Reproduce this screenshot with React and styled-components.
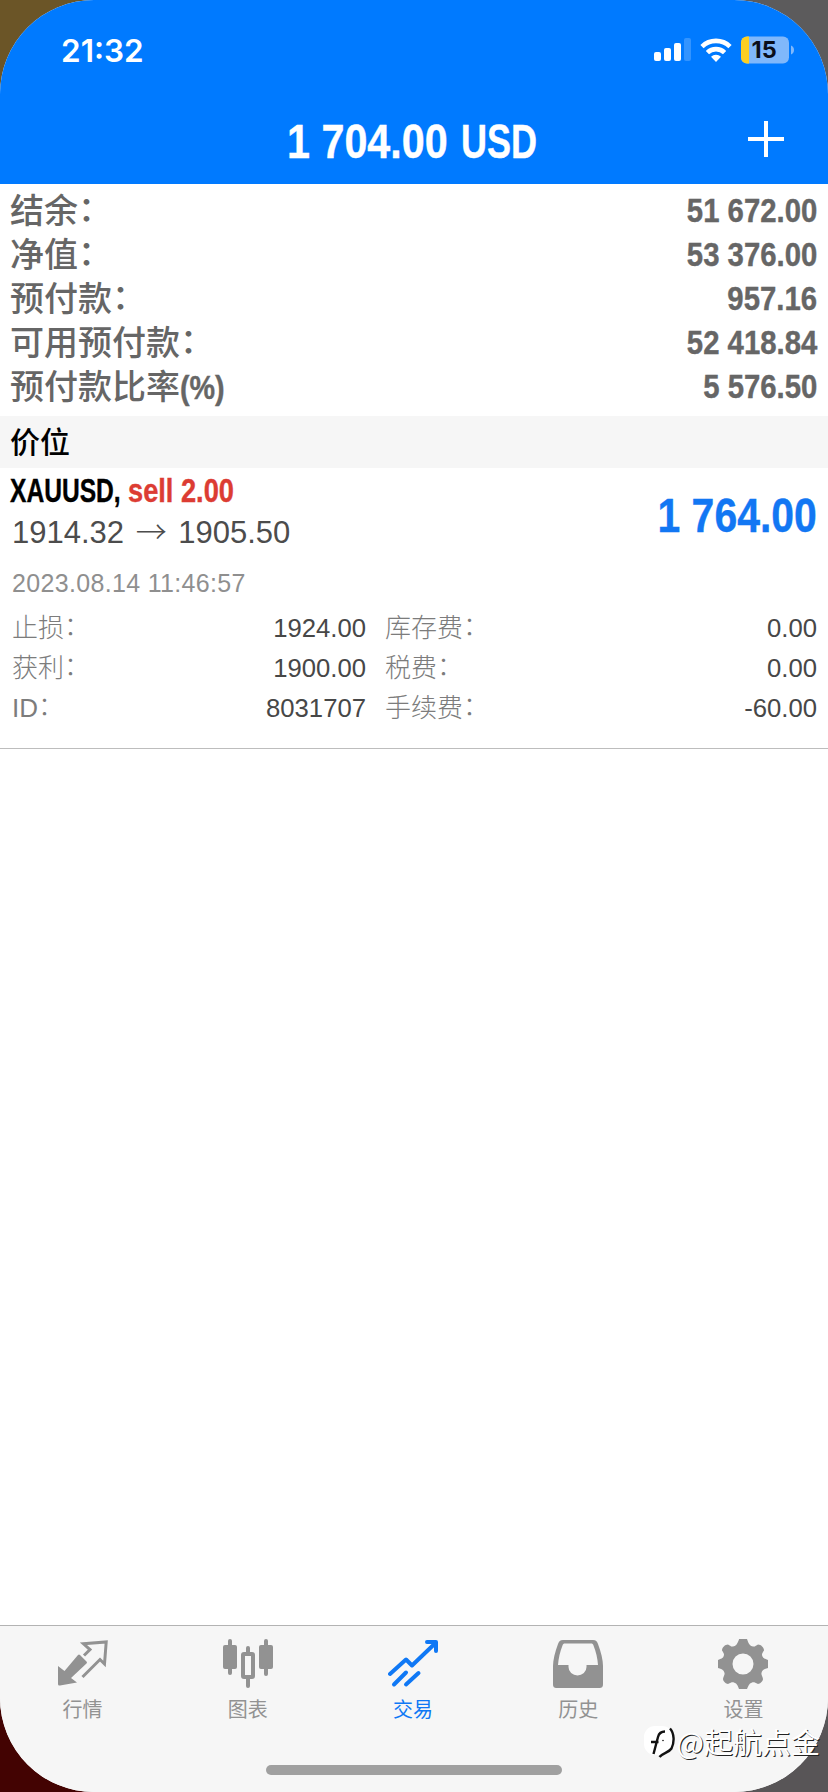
import React from 'react';
import styled, { createGlobalStyle } from 'styled-components';

const BLUE = '#007aff';
const GREY = '#929292';

const GlobalStyle = createGlobalStyle`
    * {
        box-sizing: border-box;
    }
    body {
        margin: 0;
        font-family: 'Liberation Sans', 'Noto Sans CJK SC', sans-serif;
    }
`;

/*
* Screen
* */
const Backdrop = styled('div')`
    position: relative;
    width: 828px;
    height: 1792px;
    overflow: hidden;
    background:
        linear-gradient(#6b5527, #6b5527) 0 0 / 50% 50% no-repeat,
        linear-gradient(#5c5b5c, #5c5b5c) 100% 0 / 50% 50% no-repeat,
        linear-gradient(#430302, #430302) 0 100% / 50% 50% no-repeat,
        linear-gradient(#585557, #585557) 100% 100% / 50% 50% no-repeat;
`;

const Screen = styled('div')`
    position: relative;
    display: flex;
    flex-direction: column;
    width: 100%;
    height: 100%;
    overflow: hidden;
    border-radius: 94px;
    background: #fff;
`;

const Header = styled('header')`
    height: 184px;
    background: ${BLUE};
    color: #fff;
`;

const StatusBar = styled('div')`
    display: flex;
    justify-content: space-between;
    align-items: center;
    height: 100px;
    padding: 0 33px 0 61px;
`;

const StatusIcons = styled('div')`
    display: flex;
    align-items: center;
    gap: 9px;
`;

const Clock = styled('time')`
    font-family: Inter, sans-serif;
    font-size: 31.5px;
    font-weight: 600;
`;

const TitleBar = styled('div')`
    display: grid;
    grid-template-columns: 1fr auto 1fr;
    align-items: center;
    height: 84px;
    padding: 0 44px 1px;
`;

const Title = styled('h1')`
    grid-column: 2;
    display: flex;
    gap: 13px;
    margin: 0 3px 0 0;
`;

const AddButton = styled('button')`
    grid-column: 3;
    justify-self: end;
    display: flex;
    padding: 0;
    margin-bottom: 5px;
    border: 0;
    background: none;
    color: inherit;
`;

/*
* Narrow bold text, used for money and the symbol line
* */
const Condensed = styled('span')`
    display: inline-block;
    width: ${(p) => (p.$width ? `${p.$width}px` : 'auto')};
    font-family: 'Liberation Sans', sans-serif;
    font-size: ${(p) => p.$size}px;
    font-weight: 700;
    line-height: 1;
    white-space: pre;
    color: ${(p) => p.$color || 'inherit'};
    -webkit-text-stroke: 0.4px currentColor;
    transform: scaleX(${(p) => p.$scale});
    transform-origin: ${(p) => (p.$width ? 'left' : 'right')} center;
`;

/*
* Account summary
* */
const Summary = styled('dl')`
    margin: 0;
    padding: 4px 11px 8px 10px;
    height: 232px;
    color: #666;
`;

const SummaryRow = styled('div')`
    display: flex;
    justify-content: space-between;
    align-items: center;
    height: 44px;
`;

const SummaryLabel = styled('dt')`
    font-family: 'Noto Sans CJK SC', sans-serif;
    font-size: 34px;
    font-weight: 500;
    line-height: 42px;
    height: 44px;
`;

const Colon = styled('span')`
    line-height: 1;
    vertical-align: 0.06em;
`;

const SummaryValue = styled('dd')`
    margin: 0;
`;

const SectionTitle = styled('h2')`
    margin: 0;
    padding-left: 10px;
    height: 52px;
    background: #f6f6f6;
    color: #000;
    font-family: 'Noto Sans CJK SC', sans-serif;
    font-size: 30px;
    font-weight: 500;
    line-height: 49px;
`;

/*
* Open position
* */
const Position = styled('section')`
    height: 281px;
    padding: 6px 11px 0 12px;
    border-bottom: 1px solid #bdbdbd;
`;

const PositionTop = styled('div')`
    display: flex;
    justify-content: space-between;
    align-items: center;
    height: 84px;
`;

const SymbolLine = styled('div')`
    display: flex;
    gap: 8px;
    height: 38px;
    margin-left: -2px;
`;

const PriceLine = styled('div')`
    height: 46px;
    color: #4c4c4c;
    font-size: 31px;
    line-height: 41px;
    white-space: pre;
`;

const Arrow = styled('span')`
    margin: 0 3px;
    font-family: 'Noto Sans CJK SC', sans-serif;
    font-weight: 300;
    line-height: 1;
`;

const OpenTime = styled('div')`
    height: 50px;
    padding-top: 2px;
    color: #8f8f8f;
    font-size: 25px;
    line-height: 46px;
    letter-spacing: 0.33px;
`;

const Details = styled('div')`
    display: grid;
    grid-template-columns: 354px 1fr;
    column-gap: 19px;
`;

const DetailRow = styled('div')`
    display: flex;
    justify-content: space-between;
    align-items: center;
    height: 40px;
    font-size: 26px;
    line-height: 40px;
`;

const DetailLabel = styled('span')`
    color: #7c7c7c;
    font-weight: 300;
`;

const DetailValue = styled('span')`
    color: #474747;
    font-size: 25.7px;
`;

const Spacer = styled('div')`
    flex: 1;
`;

/*
* Bottom navigation
* */
const TabBar = styled('nav')`
    display: grid;
    grid-template-columns: repeat(5, 1fr);
    height: 167px;
    padding-right: 2px;
    border-top: 1px solid #b3b3b3;
    background: #f6f6f6;
`;

const Tab = styled('a')`
    display: flex;
    flex-direction: column;
    align-items: center;
    padding-top: 13px;
    color: ${(p) => (p.$active ? '#0f78f5' : GREY)};
`;

const TabLabel = styled('span')`
    margin-top: 5px;
    font-family: 'Noto Sans CJK SC', sans-serif;
    font-size: 20px;
    line-height: 30px;
`;

const HomeIndicator = styled('div')`
    position: absolute;
    left: 266px;
    bottom: 17px;
    width: 296px;
    height: 10px;
    border-radius: 5px;
    background: #a0a0a0;
`;

const Watermark = styled('div')`
    position: absolute;
    right: 8px;
    bottom: 32px;
    display: flex;
    align-items: center;
    gap: 2px;
    color: #fff;
    font-family: 'Noto Sans CJK SC', sans-serif;
    font-size: 29px;
    font-weight: 400;
    line-height: 36px;
    white-space: nowrap;
    text-shadow: 1px 1px 0 #222;
`;

const WatermarkText = styled('span')`
    margin-top: -5px;
`;

const SignalIcon = () => (
	<svg width="37" height="24" viewBox="0 0 37 24" fill="#fff">
		<rect x="0" y="14" width="7" height="9" rx="2"/>
		<rect x="10" y="10" width="7" height="13" rx="2"/>
		<rect x="20" y="5" width="7" height="18" rx="2"/>
		<rect x="30" y="0" width="7" height="23" rx="2" opacity="0.2"/>
	</svg>
);

const WifiIcon = () => (
	<svg width="32" height="24" viewBox="0 0 32 24" fill="none" stroke="#fff" strokeWidth="4.6">
		<path d="M2 8.6a20 20 0 0 1 28 0"/>
		<path d="M7.4 14.6a12.3 12.3 0 0 1 17.2 0"/>
		<path d="M16 24l-5-5.2a7.2 7.2 0 0 1 10 0z" fill="#fff" stroke="none"/>
	</svg>
);

const BatteryIcon = () => (
	<svg width="54" height="28" viewBox="0 0 54 28">
		<clipPath id="battery">
			<rect x="0" y="0.5" width="48" height="27" rx="6"/>
		</clipPath>
		<g clipPath="url(#battery)">
			<rect width="48" height="28" fill="#80b8fb"/>
			<rect width="8" height="28" fill="#fccf20"/>
		</g>
		<path d="M50 9.5c4 1.5 4 7.5 0 9z" fill="#80b8fb"/>
		<text x="23.2" y="22.3" textAnchor="middle" fontFamily="Inter, sans-serif" fontSize="23.5" fontWeight="700" fill="#0a0f1c">15</text>
	</svg>
);

const PlusIcon = () => (
	<svg width="36" height="36" viewBox="0 0 36 36" stroke="#fff" strokeWidth="4">
		<path d="M18 0v36M0 18h36"/>
	</svg>
);

const QuotesIcon = () => (
	<svg width="50" height="50" viewBox="0 0 50 50">
		<path d="M0 27l6.500 5L20 16q1-1 2 0l6.500 6.500q1 1 0 2L13 39l6 4.500L2 46.500Q0 47 0 45z" fill="currentColor"/>
		<path d="M26 16.500l6-6L25.500 4.800l22.700-1.800-1.700 22-4.500-4.500-17.500 17.500" fill="none" stroke="currentColor" strokeWidth="3"/>
	</svg>
);

const ChartIcon = () => (
	<svg width="50" height="50" viewBox="0 0 50 50" fill="currentColor">
		<rect x="5" y="0" width="4" height="36" rx="2"/>
		<rect x="0" y="6" width="14" height="24" rx="2"/>
		<rect x="23" y="7" width="4" height="9" rx="2"/>
		<rect x="23" y="38" width="4" height="11" rx="2"/>
		<rect x="20" y="15" width="10" height="23" rx="1" fill="none" stroke="currentColor" strokeWidth="4"/>
		<rect x="41" y="0" width="4" height="37" rx="2"/>
		<rect x="36" y="6" width="14" height="24" rx="2"/>
	</svg>
);

const TradeIcon = () => (
	<svg width="50" height="50" viewBox="0 0 50 50" fill="none" stroke="currentColor" strokeWidth="4" strokeLinecap="round" strokeLinejoin="round">
		<path d="M2 35l16-14.500 6 6L47.500 4"/>
		<path d="M39 3h9v9"/>
		<path d="M6 45.500L18 33.500M18 45.500L30.500 34"/>
	</svg>
);

const HistoryIcon = () => (
	<svg width="50" height="50" viewBox="0 0 50 50" fill="currentColor">
		<path fillRule="evenodd" d="M10 1h30c3 0 4 1.500 5 4 3 8 5 16 5 22v18c0 3-1 4-4 4H4c-3 0-4-1-4-4V27C0 21 2 13 5 5c1-2.500 2-4 5-4zM12 4.500c-1.500 0-2 .5-2.500 2C7 13 5.500 19 5 26h10.500v2a9 8.500 0 0 0 18 0v-2H45c-.5-7-2-13-4.500-19.500-.5-1.500-1-2-2.500-2z"/>
	</svg>
);

const SettingsIcon = () => (
	<svg width="50" height="50" viewBox="-25 -25 50 50" fill="currentColor">
		<path fillRule="evenodd" d="M-4-25h8c2 6 3.500 7 6 7.500 2 .5 3-1 5-2 3 0 6 3 6 6-2 3-2.500 4-1.500 6 1 2 2 2 5.500 3.500v8c-5 1.500-6 2.500-6.500 5-.5 2 1 3 1.500 6 0 2-3 5-5 5-3-1.500-4-2-6-1.500-2.500 1-3 2-5 6.500h-8c-1.500-4.500-2.500-5.500-5-6.500-2-.5-3 0-6 1.500-2 0-5-3-5-5 .5-3 2-4 1.500-6-.5-2.500-1.500-3.500-6.500-5v-8c3.500-1.500 4.500-1.500 5.500-3.500 1-2 .5-3-1.500-6 0-3 3-6 6-6 2 1 3 2.500 5 2 2.500-.5 4-1.500 6-7zM0-10.500a10.500 10.500 0 1 0 0 21 10.500 10.500 0 1 0 0-21z"/>
	</svg>
);

const WatermarkLogo = () => (
	<svg width="31" height="34" viewBox="0 0 31 34" fill="none">
		<rect x="0" y="0" width="29" height="29" rx="11" fill="#fff"/>
		<path d="M9.500 28l4.500-17c1-4 3-5.500 7-5.500M7 16h7.500" stroke="#111" strokeWidth="2.400"/>
		<path d="M26 2.500c4.500 5 4.500 14 1.500 20-2.500 4-9 4.500-12 8.500" stroke="#111" strokeWidth="2.400"/>
		<circle cx="19" cy="14.500" r="0.800" fill="#111"/>
	</svg>
);

const summary = [
	{ label: '结余', colon: true, value: '51 672.00' },
	{ label: '净值', colon: true, value: '53 376.00' },
	{ label: '预付款', colon: true, value: '957.16' },
	{ label: '可用预付款', colon: true, value: '52 418.84' },
	{ label: '预付款比率', unit: '(%)', value: '5 576.50' },
];

const details = [
	{ label: '止损', value: '1924.00' },
	{ label: '库存费', value: '0.00' },
	{ label: '获利', value: '1900.00' },
	{ label: '税费', value: '0.00' },
	{ label: 'ID', value: '8031707' },
	{ label: '手续费', value: '-60.00' },
];

const tabs = [
	{ label: '行情', Icon: QuotesIcon },
	{ label: '图表', Icon: ChartIcon },
	{ label: '交易', Icon: TradeIcon, active: true },
	{ label: '历史', Icon: HistoryIcon },
	{ label: '设置', Icon: SettingsIcon },
];

const App = () => (
	<Backdrop>
		<GlobalStyle/>
		<Screen>
			<Header>
				<StatusBar>
					<Clock>21:32</Clock>
					<StatusIcons>
						<SignalIcon/>
						<WifiIcon/>
						<BatteryIcon/>
					</StatusIcons>
				</StatusBar>
				<TitleBar>
					<Title>
						<Condensed $size={48} $scale={0.86} $width={161}>1 704.00</Condensed>
						<Condensed $size={48} $scale={0.75} $width={77}>USD</Condensed>
					</Title>
					<AddButton aria-label="Add">
						<PlusIcon/>
					</AddButton>
				</TitleBar>
			</Header>

			<Summary>
				{summary.map(({ label, colon, unit, value }) => (
					<SummaryRow key={label}>
						<SummaryLabel>
							{label}
							{colon && <Colon>：</Colon>}
							{unit && <Condensed $size={33} $scale={0.87} $width={46}>{unit}</Condensed>}
						</SummaryLabel>
						<SummaryValue>
							<Condensed $size={34} $scale={0.862}>{value}</Condensed>
						</SummaryValue>
					</SummaryRow>
				))}
			</Summary>

			<SectionTitle>价位</SectionTitle>

			<Position>
				<PositionTop>
					<div>
						<SymbolLine>
							<Condensed $size={33} $scale={0.745} $width={110} $color="#000">XAUUSD,</Condensed>
							<Condensed $size={33} $scale={0.825} $width={106} $color="#dc3c33">sell 2.00</Condensed>
						</SymbolLine>
						<PriceLine>1914.32 <Arrow>→</Arrow> 1905.50</PriceLine>
					</div>
					<Condensed $size={48} $scale={0.853} $color="#1277f3">1 764.00</Condensed>
				</PositionTop>
				<OpenTime>2023.08.14 11:46:57</OpenTime>
				<Details>
					{details.map(({ label, value }) => (
						<DetailRow key={label}>
							<DetailLabel>{label}<Colon>：</Colon></DetailLabel>
							<DetailValue>{value}</DetailValue>
						</DetailRow>
					))}
				</Details>
			</Position>

			<Spacer/>

			<TabBar>
				{tabs.map(({ label, Icon, active }) => (
					<Tab key={label} $active={active}>
						<Icon/>
						<TabLabel>{label}</TabLabel>
					</Tab>
				))}
			</TabBar>

			<HomeIndicator/>
		</Screen>
		<Watermark>
			<WatermarkLogo/>
			<WatermarkText>@起航点金</WatermarkText>
		</Watermark>
	</Backdrop>
);

export default App;
